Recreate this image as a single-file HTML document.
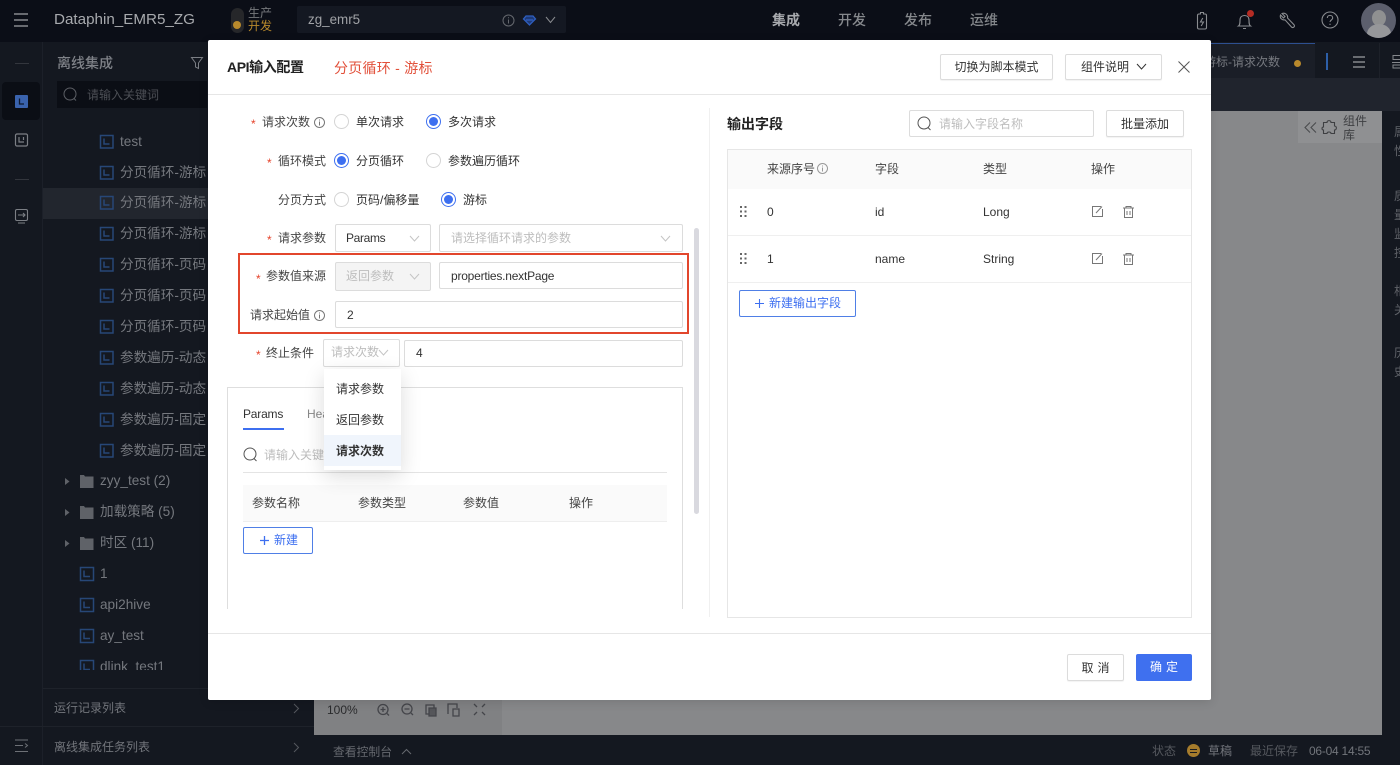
<!DOCTYPE html>
<html lang="zh">
<head>
<meta charset="utf-8">
<title>API输入配置</title>
<style>
html,body{margin:0;padding:0;width:1400px;height:765px;overflow:hidden;background:#141820}
body{position:relative;font-family:"Liberation Sans","Noto Sans CJK SC",sans-serif;font-size:12px;color:#333}
div,span,svg{position:absolute;box-sizing:border-box}
.t{white-space:nowrap;line-height:20px;height:20px}
.s{color:#75787e;font-size:13.6px}
.n{color:#85888c;font-size:14px;font-weight:500}
.lab{color:#444;font-size:12px}
.req{color:#e5432b;font-size:12px}
.opt{color:#333;font-size:12px}
.ph{color:#bdbdbd;font-size:12px}
.box{border:1px solid #dcdcdc;border-radius:2px;background:#fff}
.btn{border:1px solid #dcdcdc;border-radius:2px;background:#fff;text-align:center;font-size:12px;color:#333;box-shadow:0 1px 1px rgba(0,0,0,.05)}
.bl{border:1px solid #4f7fe6;border-radius:2px;background:#fff;color:#3d6ff0;font-size:12px}
.rd{width:15px;height:15px;border-radius:50%;border:1px solid #d4d4d4;background:#fff}
.rd.on{border-color:#3d6ff0}
.rd.on:after{content:"";position:absolute;left:2px;top:2px;width:9px;height:9px;border-radius:50%;background:#3d6ff0}
.rp{color:#5f6268;font-size:12px;width:6px;overflow:hidden}
svg{overflow:visible}
</style>
</head>
<body>
<!-- top bar -->
<div style="left:0;top:0;width:1400px;height:42px;background:#0b0e17"></div>
<svg style="left:14px;top:13px" width="14" height="14" fill="none" stroke="#a0a2a6" stroke-width="1.2"><path d="M0 1h14M0 7h14M0 13h14"/></svg>
<div class="t" style="left:54px;top:10px;font-size:15.2px;color:#a8aaae">Dataphin_EMR5_ZG</div>
<div style="left:231px;top:8px;width:13px;height:25px;border-radius:7px;background:#26272a"></div>
<div style="left:233px;top:21px;width:8px;height:8px;border-radius:50%;background:#b8892c"></div>
<div class="t" style="left:248px;top:3px;color:#76787c;font-size:12px">生产</div>
<div class="t" style="left:248px;top:16px;color:#b8892c;font-size:12px">开发</div>
<div style="left:297px;top:6px;width:269px;height:27px;background:#141822;border-radius:2px"></div>
<div class="t" style="left:308px;top:10px;color:#a0a2a6;font-size:13.4px">zg_emr5</div>
<svg style="left:502px;top:14px" width="13" height="13" fill="none" stroke="#65686e"><circle cx="6.500" cy="6.500" r="5.500"/><path d="M6.500 5.500v4M6.500 3.200v1"/></svg>
<svg style="left:523px;top:15px" width="13" height="11" fill="#1e3a78" stroke="#2f5fc0" stroke-width="1.300"><path d="M3 1h7l2.500 3L6.500 10 .5 4z"/><path d="M3 5h7"/></svg>
<svg style="left:545px;top:16px" width="11" height="8" fill="none" stroke="#8a8c90"><path d="M1 1l4.500 5.500L10 1"/></svg>
<div class="t" style="left:772px;top:10px;font-size:14px;font-weight:700;color:#a8aaae">集成</div>
<div class="t n" style="left:838px;top:10px">开发</div>
<div class="t n" style="left:904px;top:10px">发布</div>
<div class="t n" style="left:970px;top:10px">运维</div>
<svg style="left:1195px;top:11px" width="14" height="20" fill="none" stroke="#8a8c90" stroke-width="1.100"><path d="M2.500 4.500Q2.500 3 4 3h1.500V1.500h3V3H10q1.500 0 1.500 1.500v12q0 1.500-1.500 1.500H4q-1.500 0-1.500-1.500zM7.800 7L5.500 11h3l-2.300 4"/></svg>
<svg style="left:1237px;top:11px" width="16" height="20" fill="none" stroke="#8a8c90" stroke-width="1.100"><path d="M1.500 15c1.500-1 1.500-3 1.500-6 0-3 2-4.500 4.500-4.500S12 6 12 9c0 3 0 5 1.500 6zM6 17.500h3"/></svg>
<div style="left:1247px;top:10px;width:7px;height:7px;border-radius:50%;background:#b52c24"></div>
<svg style="left:1279px;top:12px" width="17" height="17" fill="none" stroke="#8a8c90" stroke-width="1.100"><path d="M3 1.500L6 4.500 4.500 6 1.500 3C.5 6 3 8.500 6 7.800L12.500 15C14 16.500 16.500 14.500 15 12.800L8.500 6C9.200 3 6 .2 3 1.500z"/></svg>
<svg style="left:1321px;top:11px" width="18" height="18" fill="none" stroke="#8a8c90" stroke-width="1.100"><circle cx="9" cy="9" r="8"/><path d="M6.300 7c0-3.500 5.400-3.500 5.400 0 0 2-2.700 2-2.700 4M9 12.800v1.200"/></svg>
<div style="left:1361px;top:3px;width:35px;height:35px;border-radius:50%;background:#5c5f6d;overflow:hidden">
<div style="left:11px;top:7px;width:14px;height:16px;border-radius:50%;background:#8f9091"></div>
<div style="left:6px;top:21px;width:24px;height:20px;border-radius:50%;background:#96979a"></div>
</div>

<!-- left rail -->
<div style="left:42px;top:42px;width:1px;height:723px;background:#1c2029"></div>
<div style="left:15px;top:63px;width:14px;height:1px;background:#33363d"></div>
<div style="left:2px;top:82px;width:38px;height:38px;border-radius:4px;background:#0b0e15"></div>
<div style="left:15px;top:95px;width:13px;height:13px;border-radius:1px;background:#3a63ad"></div>
<svg style="left:15px;top:95px" width="13" height="13" fill="none" stroke="#0f1a30" stroke-width="1.300"><path d="M4.500 3.500V9h4.500"/></svg>
<svg style="left:15px;top:133px" width="13" height="14" fill="none" stroke="#7c7f85" stroke-width="1.200"><rect x=".5" y="1" width="12" height="12" rx="1.500"/><path d="M4 4v5h5M8.500 4v3"/></svg>
<div style="left:15px;top:179px;width:14px;height:1px;background:#33363d"></div>
<svg style="left:15px;top:209px" width="13" height="15" fill="none" stroke="#7c7f85" stroke-width="1.100"><rect x=".5" y=".5" width="12" height="11" rx="1.500"/><path d="M3 6h7M8 4l2 2-2 2M3 14h7"/></svg>
<svg style="left:15px;top:739px" width="13" height="14" fill="none" stroke="#6d7076" stroke-width="1"><path d="M0 1h13M0 6.500h8M0 12.500h13M10 4.500l2.500 2-2.500 2"/></svg>

<!-- sidebar -->
<div class="t" style="left:57px;top:53px;font-size:14px;font-weight:500;color:#7f8288">离线集成</div>
<svg style="left:191px;top:57px" width="12" height="13" fill="none" stroke="#7c7f85"><path d="M.5.500h11L7.500 6v5.500l-3-1.500V6z"/></svg>
<div style="left:57px;top:81px;width:150px;height:27px;background:#0b0e15"></div>
<svg style="left:63px;top:87px" width="15" height="15" fill="none" stroke="#5c5f65"><circle cx="7" cy="7" r="6"/><path d="M11 11.500l2 2"/></svg>
<div class="t" style="left:87px;top:85px;color:#4c4f55;font-size:12px">请输入关键词</div>

<div style="left:43px;top:188px;width:165px;height:31px;background:#22262e"></div>

<div style="left:0;top:125px;width:208px;height:545px;overflow:hidden">
<svg style="left:100px;top:10px" width="14" height="345" fill="none" stroke="#274777" stroke-width="1.500">
<g id="ic"><rect x=".5" y=".5" width="12.500" height="12.500"/><path d="M4 3.500V9h5.500"/></g>
<use href="#ic" y="31"/><use href="#ic" y="61"/><use href="#ic" y="92"/><use href="#ic" y="123"/><use href="#ic" y="154"/><use href="#ic" y="185"/><use href="#ic" y="216"/><use href="#ic" y="247"/><use href="#ic" y="278"/><use href="#ic" y="309"/>
</svg>
<div class="t s" style="left:120px;top:7px">test</div>
<div class="t s" style="left:120px;top:38px">分页循环-游标</div>
<div class="t s" style="left:120px;top:68px">分页循环-游标</div>
<div class="t s" style="left:120px;top:99px">分页循环-游标</div>
<div class="t s" style="left:120px;top:130px">分页循环-页码</div>
<div class="t s" style="left:120px;top:161px">分页循环-页码</div>
<div class="t s" style="left:120px;top:192px">分页循环-页码</div>
<div class="t s" style="left:120px;top:223px">参数遍历-动态</div>
<div class="t s" style="left:120px;top:254px">参数遍历-动态</div>
<div class="t s" style="left:120px;top:285px">参数遍历-固定</div>
<div class="t s" style="left:120px;top:316px">参数遍历-固定</div>
<svg style="left:65px;top:350px" width="30" height="75" fill="#5f6268">
<path d="M0 3l4.500 3.500L0 10zM0 34l4.500 3.500L0 41zM0 65l4.500 3.500L0 72z"/>
<path d="M15 0h4l1 1.500h8.500V13H15zM15 31h4l1 1.500h8.500V44H15zM15 62h4l1 1.500h8.500V75H15z"/>
</svg>
<div class="t s" style="left:100px;top:346px">zyy_test (2)</div>
<div class="t s" style="left:100px;top:377px">加载策略 (5)</div>
<div class="t s" style="left:100px;top:408px">时区 (11)</div>
<svg style="left:80px;top:442px" width="14" height="110" fill="none" stroke="#274777" stroke-width="1.500">
<g id="ic2"><rect x=".5" y=".5" width="13" height="13"/><path d="M4 3.500V9.500h6"/></g>
<use href="#ic2" y="31"/><use href="#ic2" y="62"/><use href="#ic2" y="93"/>
</svg>
<div class="t s" style="left:100px;top:439px">1</div>
<div class="t s" style="left:100px;top:470px">api2hive</div>
<div class="t s" style="left:100px;top:501px">ay_test</div>
<div class="t s" style="left:100px;top:532px">dlink_test1</div>
</div>

<div style="left:43px;top:688px;width:271px;height:1px;background:#1e222a"></div>
<div style="left:0;top:726px;width:314px;height:1px;background:#1e222a"></div>
<div class="t" style="left:54px;top:698px;font-size:12px;color:#72757b">运行记录列表</div>
<div class="t" style="left:54px;top:737px;font-size:12px;color:#72757b">离线集成任务列表</div>
<svg style="left:293px;top:703px" width="7" height="11" fill="none" stroke="#55585e"><path d="M1 1l4.500 4.500L1 10"/></svg>
<svg style="left:293px;top:742px" width="7" height="11" fill="none" stroke="#55585e"><path d="M1 1l4.500 4.500L1 10"/></svg>

<!-- tabs / canvas -->
<div style="left:1211px;top:43px;width:104px;height:35px;background:#1a1e27;border-top:1px solid #2d4f90"></div>
<div style="left:1211px;top:78px;width:189px;height:33px;background:#20242d"></div>
<div class="t" style="left:1180px;top:52px;width:100px;text-align:right;font-size:12px;color:#777a80">游标-请求次数</div>
<div style="left:1294px;top:60px;width:7px;height:7px;border-radius:50%;background:#b8892c"></div>
<div style="left:1326px;top:53px;width:2px;height:17px;background:#2d5fa8"></div>
<svg style="left:1353px;top:56px" width="12" height="12" fill="none" stroke="#85888c" stroke-width="1.500"><path d="M0 1h12M0 6h12M0 11h12"/></svg>
<div style="left:1379px;top:43px;width:1px;height:35px;background:#1d2129"></div>
<svg style="left:1392px;top:55px" width="8" height="14" fill="none" stroke="#85888c"><path d="M1 .5h8v4H1zM0 7.500h9M1 10h8v3H1z"/></svg>

<div style="left:314px;top:111px;width:1068px;height:624px;background:#87888a"></div>
<div style="left:1298px;top:111px;width:84px;height:32px;background:#8f9092"></div>
<svg style="left:1304px;top:122px" width="13" height="11" fill="none" stroke="#4a4b4e" stroke-width="1.100"><path d="M6 .5L1 5.500l5 5M12 .5L7 5.500l5 5"/></svg>
<svg style="left:1321px;top:119px" width="16" height="16" fill="none" stroke="#3e3f42" stroke-width="1.100"><path d="M6 3.500C6 1 10 1 10 3.500h3.500V7C16 7 16 11 13.500 11V14.500H10C10 12.500 6 12.500 6 14.500H2.500V11C.5 11 .5 8 2.500 8V3.500z"/></svg>
<div class="t" style="left:1343px;top:111px;font-size:12px;color:#3e3f42">组件</div>
<div class="t" style="left:1343px;top:125px;font-size:12px;color:#3e3f42">库</div>

<div class="t rp" style="left:1394px;top:122px">属</div>
<div class="t rp" style="left:1394px;top:141px">性</div>
<div class="t rp" style="left:1394px;top:186px">质</div>
<div class="t rp" style="left:1394px;top:205px">量</div>
<div class="t rp" style="left:1394px;top:224px">监</div>
<div class="t rp" style="left:1394px;top:243px">控</div>
<div class="t rp" style="left:1394px;top:281px">相</div>
<div class="t rp" style="left:1394px;top:300px">关</div>
<div class="t rp" style="left:1394px;top:343px">历</div>
<div class="t rp" style="left:1394px;top:362px">史</div>

<!-- zoom bar -->
<div style="left:314px;top:700px;width:188px;height:35px;background:#808183"></div>
<div class="t" style="left:327px;top:700px;font-size:12px;color:#2a2b2d">100%</div>
<svg style="left:377px;top:703px" width="112" height="14" fill="none" stroke="#44454a" stroke-width="1.300">
<circle cx="6" cy="6.500" r="5"/><path d="M3.500 6.500h5M6 4v5M10 10.500l2 2"/>
<circle cx="30" cy="6" r="5"/><path d="M27.500 6h5M34 10l2 2"/>
<path d="M49 2h8v9h-8z"/><path d="M52 5h7v8h-7z" fill="#55565a"/>
<path d="M71 11V1h9v4M76 6h6v7h-6z"/>
<path d="M97 1l3 3M108 1l-3 3M97 12l3-3M108 12l-3-3"/>
</svg>

<!-- console bar -->
<div class="t" style="left:333px;top:742px;font-size:11.800px;color:#66696f">查看控制台</div>
<svg style="left:401px;top:748px" width="11" height="7" fill="none" stroke="#66696f"><path d="M1 6l4.500-4.500L10 6"/></svg>
<div class="t" style="left:1152px;top:741px;font-size:12px;color:#55585e">状态</div>
<div style="left:1187px;top:744px;width:13px;height:13px;border-radius:50%;background:#a67c2c"></div>
<div style="left:1190px;top:749px;width:7px;height:1px;background:#1a1c20"></div>
<div style="left:1190px;top:752px;width:7px;height:1px;background:#1a1c20"></div>
<div class="t" style="left:1208px;top:741px;font-size:12px;color:#72757b">草稿</div>
<div class="t" style="left:1250px;top:741px;font-size:12px;color:#55585e">最近保存</div>
<div class="t" style="left:1309px;top:741px;font-size:12px;letter-spacing:-.25px;color:#72757b">06-04 14:55</div>

<!-- modal -->
<div style="left:208px;top:40px;width:1003px;height:660px;background:#fff;border-radius:2px;box-shadow:0 2px 10px rgba(0,0,0,.12)"></div>
<div style="left:208px;top:94px;width:1003px;height:1px;background:#e6e6e6"></div>
<div style="left:208px;top:633px;width:1003px;height:1px;background:#e6e6e6"></div>
<div class="t" style="left:227px;top:57px;font-size:14px;font-weight:700;letter-spacing:-.4px;color:#222">API输入配置</div>
<div class="t" style="left:334px;top:58px;font-size:14px;letter-spacing:.25px;color:#e2503a">分页循环 - 游标</div>
<div class="btn t" style="left:940px;top:54px;width:113px;height:26px;line-height:25px">切换为脚本模式</div>
<div class="btn t" style="left:1065px;top:54px;width:97px;height:26px;line-height:25px;text-align:left;padding-left:15px">组件说明</div>
<svg style="left:1136px;top:63px" width="11" height="8" fill="none" stroke="#333"><path d="M1 1l4.500 5L10 1"/></svg>
<svg style="left:1178px;top:61px" width="12" height="12" fill="none" stroke="#555"><path d="M.5.500l11 11M11.500.500l-11 11"/></svg>

<!-- form labels -->
<div class="t req" style="left:251px;top:114px">*</div>
<div class="t lab" style="left:262px;top:112px">请求次数</div>
<svg style="left:314px;top:117px" width="11" height="11" fill="none" stroke="#777"><circle cx="5.500" cy="5.500" r="5"/><path d="M5.500 4.500v4M5.500 2.500v1"/></svg>
<div class="rd" style="left:334px;top:114px"></div>
<div class="t opt" style="left:356px;top:112px">单次请求</div>
<div class="rd on" style="left:426px;top:114px"></div>
<div class="t opt" style="left:448px;top:112px">多次请求</div>

<div class="t req" style="left:267px;top:153px">*</div>
<div class="t lab" style="left:278px;top:151px">循环模式</div>
<div class="rd on" style="left:334px;top:153px"></div>
<div class="t opt" style="left:356px;top:151px">分页循环</div>
<div class="rd" style="left:426px;top:153px"></div>
<div class="t opt" style="left:448px;top:151px">参数遍历循环</div>

<div class="t lab" style="left:278px;top:190px">分页方式</div>
<div class="rd" style="left:334px;top:192px"></div>
<div class="t opt" style="left:356px;top:190px">页码/偏移量</div>
<div class="rd on" style="left:441px;top:192px"></div>
<div class="t opt" style="left:463px;top:190px">游标</div>

<div class="t req" style="left:267px;top:230px">*</div>
<div class="t lab" style="left:278px;top:228px">请求参数</div>
<div class="box" style="left:335px;top:224px;width:96px;height:28px"></div>
<div class="t opt" style="left:346px;top:228px;letter-spacing:-.35px">Params</div>
<svg style="left:409px;top:235px" width="11" height="7" fill="none" stroke="#c4c4c4"><path d="M1 1l4.500 5L10 1"/></svg>
<div class="box" style="left:439px;top:224px;width:244px;height:28px"></div>
<div class="t ph" style="left:451px;top:228px">请选择循环请求的参数</div>
<svg style="left:660px;top:235px" width="11" height="7" fill="none" stroke="#c4c4c4"><path d="M1 1l4.500 5L10 1"/></svg>

<div style="left:238px;top:253px;width:451px;height:81px;border:2px solid #e2462c"></div>
<div class="t req" style="left:256px;top:269px">*</div>
<div class="t lab" style="left:266px;top:266px">参数值来源</div>
<div class="box" style="left:335px;top:262px;width:96px;height:29px;background:#f4f4f4"></div>
<div class="t ph" style="left:346px;top:266px">返回参数</div>
<svg style="left:409px;top:273px" width="11" height="7" fill="none" stroke="#c4c4c4"><path d="M1 1l4.500 5L10 1"/></svg>
<div class="box" style="left:439px;top:262px;width:244px;height:27px"></div>
<div class="t opt" style="left:451px;top:266px;letter-spacing:-.22px">properties.nextPage</div>
<div class="t lab" style="left:250px;top:305px">请求起始值</div>
<svg style="left:314px;top:310px" width="11" height="11" fill="none" stroke="#777"><circle cx="5.500" cy="5.500" r="5"/><path d="M5.500 4.500v4M5.500 2.500v1"/></svg>
<div class="box" style="left:335px;top:301px;width:348px;height:27px"></div>
<div class="t opt" style="left:347px;top:305px">2</div>

<div class="t req" style="left:256px;top:345px">*</div>
<div class="t lab" style="left:266px;top:343px">终止条件</div>
<div class="box" style="left:323px;top:339px;width:77px;height:28px"></div>
<div class="t ph" style="left:331px;top:342px">请求次数</div>
<svg style="left:378px;top:349px" width="11" height="7" fill="none" stroke="#c4c4c4"><path d="M1 1l4.500 5L10 1"/></svg>
<div class="box" style="left:404px;top:340px;width:279px;height:27px"></div>
<div class="t opt" style="left:416px;top:343px">4</div>

<!-- params box -->
<div style="left:227px;top:387px;width:456px;height:222px;border:1px solid #dedede;border-bottom:0"></div>
<div class="t" style="left:243px;top:404px;font-size:12px;letter-spacing:-.2px;color:#333">Params</div>
<div style="left:243px;top:428px;width:41px;height:2px;background:#3d6ff0"></div>
<div class="t" style="left:307px;top:404px;font-size:12px;color:#888">Headers</div>
<svg style="left:243px;top:447px" width="16" height="16" fill="none" stroke="#555"><circle cx="7" cy="7" r="6"/><path d="M11 11.500l2.500 2.500"/></svg>
<div class="t ph" style="left:264px;top:445px">请输入关键词</div>
<div style="left:243px;top:472px;width:424px;height:1px;background:#e4e4e4"></div>
<div style="left:243px;top:485px;width:424px;height:37px;background:#fafafa;border-bottom:1px solid #eee"></div>
<div class="t lab" style="left:252px;top:493px">参数名称</div>
<div class="t lab" style="left:358px;top:493px">参数类型</div>
<div class="t lab" style="left:463px;top:493px">参数值</div>
<div class="t lab" style="left:569px;top:493px">操作</div>
<div class="bl" style="left:243px;top:527px;width:70px;height:27px"></div>
<svg style="left:260px;top:536px" width="9" height="9" fill="none" stroke="#3d6ff0" stroke-width="1.300"><path d="M0 4.500h9M4.500 0v9"/></svg>
<div class="t" style="left:274px;top:530px;font-size:12px;color:#3d6ff0">新建</div>

<!-- dropdown -->
<div style="left:324px;top:369px;width:77px;height:101px;background:#fff;box-shadow:0 6px 20px rgba(0,0,0,.14)"></div>
<div style="left:324px;top:435px;width:77px;height:31px;background:#f0f5fc"></div>
<div class="t opt" style="left:336px;top:379px">请求参数</div>
<div class="t opt" style="left:336px;top:410px">返回参数</div>
<div class="t opt" style="left:336px;top:441px;font-weight:700">请求次数</div>

<!-- scrollbar / divider -->
<div style="left:694px;top:228px;width:5px;height:286px;background:#d9d9df;border-radius:3px"></div>
<div style="left:709px;top:108px;width:1px;height:509px;background:#f0f0f0"></div>

<!-- right column -->
<div class="t" style="left:727px;top:114px;font-size:14px;font-weight:700;color:#222">输出字段</div>
<div class="box" style="left:909px;top:110px;width:185px;height:27px"></div>
<svg style="left:917px;top:116px" width="15" height="15" fill="none" stroke="#555"><circle cx="7" cy="7" r="6"/><path d="M11 11.500l2.500 2.500"/></svg>
<div class="t ph" style="left:939px;top:114px">请输入字段名称</div>
<div class="btn t" style="left:1106px;top:110px;width:78px;height:27px;line-height:26px">批量添加</div>

<div style="left:727px;top:149px;width:465px;height:469px;border:1px solid #e6e6e6"></div>
<div style="left:728px;top:150px;width:463px;height:39px;background:#fafafa"></div>
<div class="t lab" style="left:767px;top:159px">来源序号</div>
<svg style="left:817px;top:163px" width="11" height="11" fill="none" stroke="#999"><circle cx="5.500" cy="5.500" r="5"/><path d="M5.500 4.500v4M5.500 2.500v1"/></svg>
<div class="t lab" style="left:875px;top:159px">字段</div>
<div class="t lab" style="left:983px;top:159px">类型</div>
<div class="t lab" style="left:1091px;top:159px">操作</div>
<div style="left:728px;top:235px;width:463px;height:1px;background:#efefef"></div>
<div style="left:728px;top:282px;width:463px;height:1px;background:#efefef"></div>
<svg style="left:740px;top:206px" width="8" height="60" fill="#666">
<g id="dr"><rect width="2" height="2"/><rect x="4.500" width="2" height="2"/><rect y="4.500" width="2" height="2"/><rect x="4.500" y="4.500" width="2" height="2"/><rect y="9" width="2" height="2"/><rect x="4.500" y="9" width="2" height="2"/></g>
<use href="#dr" y="47"/>
</svg>
<div class="t opt" style="left:767px;top:202px">0</div>
<div class="t opt" style="left:875px;top:202px">id</div>
<div class="t opt" style="left:983px;top:202px">Long</div>
<div class="t opt" style="left:767px;top:249px">1</div>
<div class="t opt" style="left:875px;top:249px">name</div>
<div class="t opt" style="left:983px;top:249px">String</div>
<svg style="left:1092px;top:206px" width="46" height="60" fill="none" stroke="#777">
<g id="act"><path d="M9 .5H.5v10h10V3M4 7l6-6.500"/><path d="M31 2h11M34 2V.5h5V2M32.500 2v9.500h8V2M35 5v4M38 5v4"/></g>
<use href="#act" y="47"/>
</svg>
<div class="bl" style="left:739px;top:290px;width:117px;height:27px"></div>
<svg style="left:755px;top:299px" width="9" height="9" fill="none" stroke="#3d6ff0" stroke-width="1.100"><path d="M0 4.500h9M4.500 0v9"/></svg>
<div class="t" style="left:769px;top:293px;font-size:12px;color:#3d6ff0">新建输出字段</div>

<!-- footer -->
<div class="btn t" style="left:1067px;top:654px;width:57px;height:27px;line-height:26px;letter-spacing:4px;padding-left:4px">取消</div>
<div class="t" style="left:1136px;top:654px;width:56px;height:27px;line-height:26px;background:#3f70ef;color:#fff;text-align:center;border-radius:2px;font-size:12px;letter-spacing:4px;padding-left:4px">确定</div>
</body>
</html>
